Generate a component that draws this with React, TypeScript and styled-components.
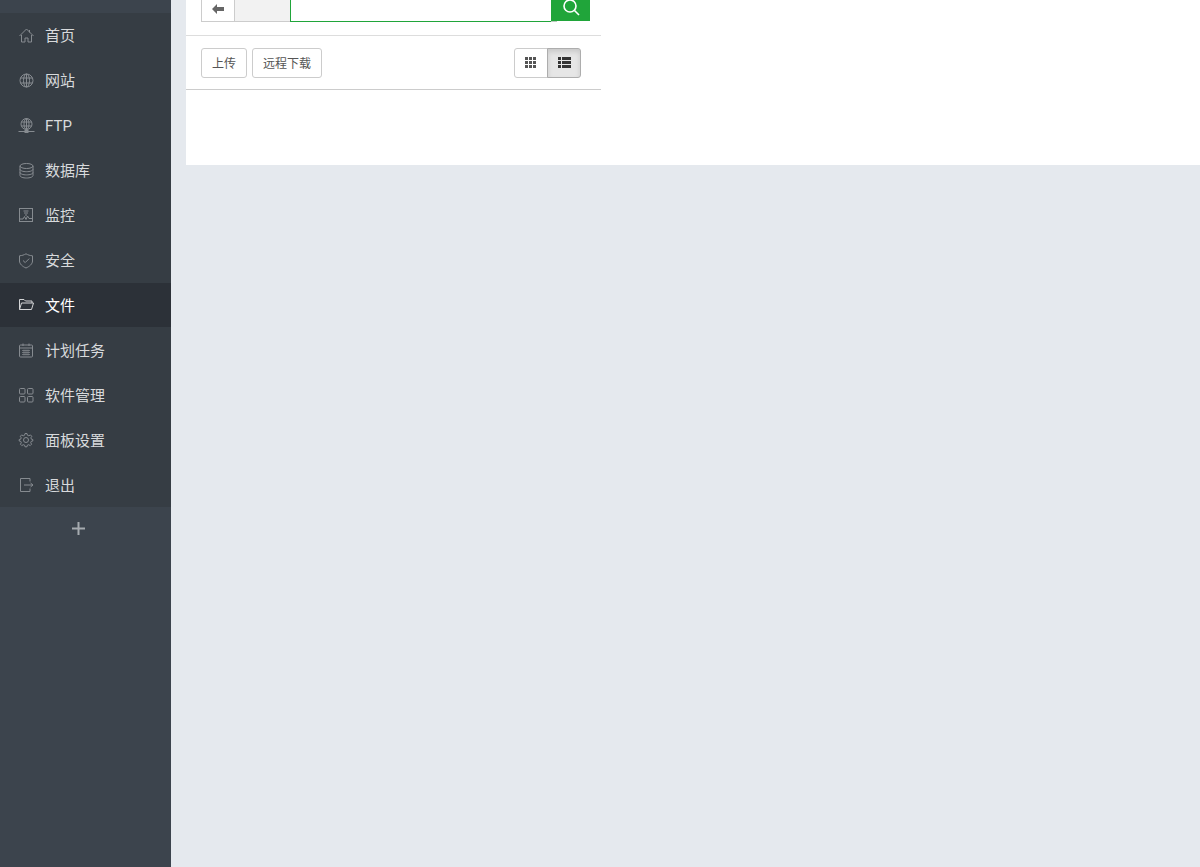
import React from 'react';
import styled, { createGlobalStyle } from 'styled-components';

const GlobalStyle = createGlobalStyle`
  html, body {
    margin: 0;
    padding: 0;
    height: 100%;
    overflow: hidden;
    background: #e5e9ee;
    font-family: "Liberation Sans", "Noto Sans CJK SC", sans-serif;
  }
`;

const icons: Record<string, React.ReactNode> = {
    home: (
        <>
            <path d="M.5 8 7.5 1 14.5 8" />
            <path d="M2.5 7V14H6V10H9V14H12.5V7" />
            <path d="M10.5 2V4.5" />
        </>
    ),
    globe: (
        <>
            <circle cx="7.5" cy="7.5" r="6.5" />
            <ellipse cx="7.5" cy="7.5" rx="3" ry="6.5" />
            <path d="M7.5 1V14M1.5 5H13.5M1.5 10H13.5" />
        </>
    ),
    ftp: (
        <>
            <circle cx="7.5" cy="6" r="5.5" />
            <ellipse cx="7.5" cy="6" rx="2.5" ry="5.5" />
            <path d="M7.5 .5V11.5M2.5 4H12.5M2.5 8H12.5M-.5 13.5H15.5" />
            <rect x="6" y="12.5" width="3" height="2" fill="currentColor" />
        </>
    ),
    database: (
        <>
            <ellipse cx="7.5" cy="3" rx="6.5" ry="2.5" />
            <path d="M1 3V12.5C1 14 4 15 7.5 15S14 14 14 12.5V3" />
            <path d="M1 6.2C1 7.7 4 8.7 7.5 8.7S14 7.7 14 6.2M1 9.4C1 10.9 4 11.9 7.5 11.9S14 10.9 14 9.4" />
        </>
    ),
    monitor: (
        <>
            <rect x=".5" y=".5" width="13" height="13" />
            <path d="M1 11H4L5.5 8.5 7 11.5 8.5 8 10 10.5H13" />
            <path d="M4.5 3H9.5M5 5H9M6 7H8" />
        </>
    ),
    shield: (
        <>
            <path d="M7 .8C9 2 11 2.6 13.5 2.8V8C13.5 11 10.5 13.5 7 15 3.5 13.5.5 11 .5 8V2.8C3 2.6 5 2 7 .8Z" />
            <path d="M4 7.5 6.2 9.6 10.2 5.6" />
        </>
    ),
    folder: (
        <>
            <path d="M.5 11.5V1.5H5L6.5 3H13V5" />
            <path d="M.5 11.5H12.5L14.5 5H2.5Z" />
        </>
    ),
    calendar: (
        <>
            <rect x=".5" y="2" width="13" height="12" rx="1" />
            <path d="M.5 5H13.5M4 .5V3M10 .5V3" />
            <path d="M3 7.5H11M3 9.5H11M3 11.5H11M5 6.5V12.5M7 6.5V12.5M9 6.5V12.5" strokeWidth=".7" />
        </>
    ),
    apps: (
        <>
            <rect x=".5" y=".5" width="5.5" height="5.5" rx="1" />
            <rect x="8.5" y=".5" width="5.5" height="5.5" rx="1" />
            <rect x=".5" y="8.5" width="5.5" height="5.5" rx="1" />
            <rect x="8.5" y="8.5" width="5.5" height="5.5" rx="1" />
        </>
    ),
    gear: (
        <>
            <circle cx="7" cy="7" r="2.5" />
            <path d="M6 .5H8L8.4 2.2 9.9 2.8 11.4 1.9 12.8 3.3 11.9 4.8 12.4 6.2 13.8 6.5V8L12.2 8.4 11.7 9.8 12.6 11.2 11.2 12.6 9.8 11.7 8.4 12.2 8 13.8H6L5.6 12.2 4.2 11.7 2.8 12.6 1.4 11.2 2.3 9.8 1.8 8.4.2 8V6.5L1.7 6.2 2.2 4.8 1.3 3.3 2.7 1.9 4.2 2.8 5.6 2.2Z" />
        </>
    ),
    logout: (
        <>
            <path d="M11 3.5V.5H1.5V13.5H11V10.5" />
            <path d="M5 7H14M11.5 5 14 7 11.5 9" />
        </>
    ),
};

const menu = [
    { label: '首页', icon: 'home' },
    { label: '网站', icon: 'globe' },
    { label: 'FTP', icon: 'ftp' },
    { label: '数据库', icon: 'database' },
    { label: '监控', icon: 'monitor' },
    { label: '安全', icon: 'shield' },
    { label: '文件', icon: 'folder', active: true },
    { label: '计划任务', icon: 'calendar' },
    { label: '软件管理', icon: 'apps' },
    { label: '面板设置', icon: 'gear' },
    { label: '退出', icon: 'logout' },
];

const App: React.FC = () => {
    return (
        <Page>
            <GlobalStyle />
            <Sidebar>
                <TopStrip />
                <Menu>
                    {menu.map((item) => (
                        <MenuItem key={item.label} $active={item.active}>
                            <MenuIcon viewBox="0 0 15 15" $active={item.active}>
                                {icons[item.icon]}
                            </MenuIcon>
                            <MenuLabel>{item.label}</MenuLabel>
                        </MenuItem>
                    ))}
                </Menu>
                <AddButton>
                    <svg width="13" height="13" viewBox="0 0 13 13">
                        <path d="M0 6.5H13M6.5 0V13" stroke="currentColor" strokeWidth="2" />
                    </svg>
                </AddButton>
            </Sidebar>
            <Main>
                <Panel>
                    <FilePane>
                        <PathRow>
                            <BackButton>
                                <svg width="12" height="10" viewBox="0 0 12 10">
                                    <path d="M0 5 5 0V3H12V7H5V10Z" fill="currentColor" />
                                </svg>
                            </BackButton>
                            <PathCrumb />
                            <PathInput />
                            <SearchButton>
                                <svg width="17" height="17" viewBox="0 0 17 17" fill="none" stroke="currentColor" strokeWidth="1.6">
                                    <circle cx="7" cy="7" r="6" />
                                    <path d="M11.5 11.5 16 16" />
                                </svg>
                            </SearchButton>
                        </PathRow>
                        <ToolRow>
                            <ToolButtons>
                                <ToolButton>上传</ToolButton>
                                <ToolButton>远程下载</ToolButton>
                            </ToolButtons>
                            <ViewToggle>
                                <ViewButton>
                                    <svg width="11" height="11" viewBox="0 0 11 11" fill="currentColor">
                                        {[0, 4, 8].flatMap((y) =>
                                            [0, 4, 8].map((x) => <rect key={`${x}-${y}`} x={x} y={y} width="3" height="3" />)
                                        )}
                                    </svg>
                                </ViewButton>
                                <ViewButton $active>
                                    <svg width="13" height="11" viewBox="0 0 13 11" fill="currentColor">
                                        {[0, 4, 8].map((y) => (
                                            <React.Fragment key={y}>
                                                <rect x="0" y={y} width="3" height="3" />
                                                <rect x="4" y={y} width="9" height="3" />
                                            </React.Fragment>
                                        ))}
                                    </svg>
                                </ViewButton>
                            </ViewToggle>
                        </ToolRow>
                    </FilePane>
                </Panel>
            </Main>
        </Page>
    );
};

export default App;

const Page = styled.div`
  display: flex;
  height: 867px;
  overflow: hidden;
`;

const Sidebar = styled.aside`
  width: 171px;
  flex-shrink: 0;
  background-color: #3c444d;
`;

const TopStrip = styled.div`
  height: 13px;
`;

const Menu = styled.nav`
  height: 494px;
  overflow: hidden;
  background-color: #363d44;
`;

const MenuItem = styled.div<{ $active?: boolean }>`
  display: flex;
  align-items: center;
  height: 45px;
  padding-left: 19px;
  font-family: Roboto, "Noto Sans CJK SC", sans-serif;
  font-size: 15px;
  color: ${(props) => (props.$active ? '#ffffff' : '#d8dadc')};
  background-color: ${(props) => (props.$active ? '#2c3138' : 'transparent')};
  box-shadow: ${(props) => (props.$active ? 'inset 0 -1px 0 #363d44' : 'none')};
`;

const MenuIcon = styled.svg<{ $active?: boolean }>`
  width: 15px;
  height: 15px;
  margin-right: 11px;
  fill: none;
  stroke: currentColor;
  stroke-width: 1;
  overflow: visible;
  color: ${(props) => (props.$active ? '#d4d5d7' : '#868b90')};
`;

const MenuLabel = styled.span`
  line-height: 20px;
`;

const AddButton = styled.div`
  display: flex;
  justify-content: center;
  padding-top: 15px;
  padding-right: 14px;
  color: #a6abb0;
`;

const Main = styled.main`
  flex: 1;
  padding-left: 15px;
`;

const Panel = styled.section`
  height: 165px;
  background-color: #ffffff;
`;

const FilePane = styled.div`
  width: 415px;
`;

const PathRow = styled.div`
  display: flex;
  height: 36px;
  padding-left: 15px;
  box-sizing: border-box;
  border-bottom: 1px solid #dddddd;
`;

const BackButton = styled.div`
  display: flex;
  align-items: center;
  justify-content: center;
  width: 34px;
  height: 22px;
  padding-bottom: 3px;
  box-sizing: border-box;
  border: 1px solid #cccccc;
  border-top: 0;
  color: #666666;
`;

const PathCrumb = styled.div`
  width: 55px;
  height: 22px;
  box-sizing: border-box;
  background-color: #f2f2f2;
  border-bottom: 1px solid #cccccc;
`;

const PathInput = styled.div`
  width: 261px;
  height: 22px;
  box-sizing: border-box;
  border-left: 1px solid #20a53a;
  border-bottom: 1px solid #20a53a;
`;

const SearchButton = styled.div`
  position: relative;
  display: flex;
  align-items: flex-start;
  justify-content: center;
  width: 39px;
  height: 21px;
  padding-left: 1px;
  box-sizing: border-box;
  background-color: #20a53a;
  color: #ffffff;
  svg {
    margin-top: -1px;
  }
  &::after {
    content: '';
    position: absolute;
    left: 0;
    bottom: -1px;
    width: 6px;
    height: 1px;
    background-color: #b9c9bc;
  }
`;

const ToolRow = styled.div`
  display: flex;
  align-items: flex-start;
  justify-content: space-between;
  height: 54px;
  box-sizing: border-box;
  padding: 12px 20px 0 15px;
  border-bottom: 1px solid #cccccc;
`;

const ToolButtons = styled.div`
  display: flex;
  gap: 5px;
`;

const ToolButton = styled.button`
  height: 30px;
  padding: 0 10px 2px;
  font-family: inherit;
  font-size: 12px;
  color: #555555;
  background-color: #ffffff;
  border: 1px solid #cccccc;
  border-radius: 3px;
`;

const ViewToggle = styled.div`
  display: flex;
`;

const ViewButton = styled.div<{ $active?: boolean }>`
  display: flex;
  align-items: center;
  justify-content: center;
  width: 34px;
  height: 30px;
  padding-bottom: 1px;
  padding-right: ${(props) => (props.$active ? '0' : '2px')};
  box-sizing: border-box;
  border: 1px solid ${(props) => (props.$active ? '#adadad' : '#cccccc')};
  border-radius: ${(props) => (props.$active ? '0 3px 3px 0' : '3px 0 0 3px')};
  margin-left: ${(props) => (props.$active ? '-1px' : '0')};
  color: ${(props) => (props.$active ? '#333333' : '#555555')};
  background-color: ${(props) => (props.$active ? '#e6e6e6' : '#ffffff')};
  box-shadow: ${(props) => (props.$active ? 'inset 0 3px 5px rgba(0, 0, 0, 0.125)' : 'none')};
`;
